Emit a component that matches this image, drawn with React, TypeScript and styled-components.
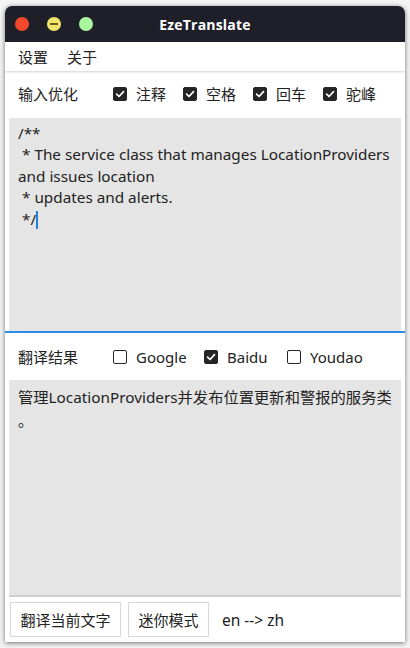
import React from "react";
import styled, { createGlobalStyle } from "styled-components";

const Global = createGlobalStyle`
  html, body { margin: 0; padding: 0; background: #f2f2f2; }
  body { font-family: "Noto Sans", "Noto Sans CJK SC", sans-serif; color: #222; }
  * { box-sizing: border-box; }
`;

const Page = styled.div`
  width: 410px;
  height: 648px;
  padding: 6px 5px;
  background: #f4f4f4;
`;

const Window = styled.div`
  width: 400px;
  height: 636px;
  display: flex;
  flex-direction: column;
  background: #fff;
  border-radius: 7px 7px 0 0;
  box-shadow: 0 1px 5px rgba(0, 0, 0, 0.55);
  overflow: hidden;
`;

const TitleBar = styled.div`
  height: 36px;
  flex: none;
  background: #1f1f2a;
  display: flex;
  align-items: center;
  position: relative;
  padding-left: 10px;
  gap: 18px;
`;

const Light = styled.div<{ $c: string }>`
  width: 14px;
  height: 14px;
  border-radius: 50%;
  background: ${(p) => p.$c};
  display: flex;
  align-items: center;
  justify-content: center;
`;

const Minus = styled.div`
  width: 8px;
  height: 2px;
  background: #6b5d18;
`;

const Title = styled.div`
  position: absolute;
  left: 0;
  right: 0;
  text-align: center;
  color: #fff;
  font-weight: 700;
  font-size: 14px;
  letter-spacing: 0.2px;
  font-family: "Open Sans", "Noto Sans", sans-serif;
`;

const MenuBar = styled.div`
  height: 29px;
  flex: none;
  display: flex;
  align-items: center;
  gap: 19px;
  padding-left: 13px;
  font-size: 15px;
  color: #222;
  box-shadow: 0 1px 2px rgba(0, 0, 0, 0.18);
  position: relative;
  z-index: 1;
`;

const OptionRow = styled.div`
  height: 47px;
  flex: none;
  display: flex;
  align-items: center;
  padding-left: 13px;
  padding-bottom: 2px;
  font-size: 15px;
`;

const RowLabel = styled.div`
  width: 95px;
  flex: none;
`;

const CheckItem = styled.label<{ $w: number }>`
  display: flex;
  align-items: center;
  width: ${(p) => p.$w}px;
  flex: none;
  gap: 9px;
  font-size: 15px;
  color: #222;
`;

const Box = styled.span<{ $on: boolean }>`
  width: 14px;
  height: 14px;
  border-radius: 2px;
  flex: none;
  display: flex;
  align-items: center;
  justify-content: center;
  background: ${(p) => (p.$on ? "#252525" : "#fff")};
  border: 1.5px solid #252525;
`;

const Input = styled.div`
  flex: none;
  height: 213px;
  margin: 0 4px;
  background: #e5e5e5;
  padding: 5px 9px;
  font-size: 15.3px;
  line-height: 21.4px;
  color: #222;
  white-space: pre-wrap;
`;

const Caret = styled.span`
  display: inline-block;
  width: 2px;
  height: 18px;
  background: #1f7fe0;
  vertical-align: -4px;
`;

const BlueLine = styled.div`
  height: 2px;
  flex: none;
  background: #2d8ae5;
`;

const ResultRow = styled(OptionRow)`
  height: 47px;
  padding-bottom: 0;
`;

const Output = styled.div`
  flex: 1;
  margin: 0 4px;
  background: #e5e5e5;
  padding: 6px 9px;
  font-size: 15.3px;
  line-height: 23px;
  color: #222;
  line-break: anywhere;
  border-bottom: 2px solid #cfcfcf;
`;

const BottomBar = styled.div`
  height: 45px;
  flex: none;
  display: flex;
  align-items: center;
  padding: 0 5px;
  gap: 7px;
  font-size: 15px;
`;

const Button = styled.button<{ $w: number }>`
  width: ${(p) => p.$w}px;
  height: 35px;
  background: #fff;
  border: 1px solid #d8d8d8;
  font-family: "Noto Sans", "Noto Sans CJK SC", sans-serif;
  font-size: 15px;
  color: #222;
  padding: 0;
`;

const Direction = styled.span`
  margin-left: 6px;
  font-size: 15.5px;
`;

const Check = ({ on }: { on: boolean }) => (
  <Box $on={on}>
    {on && (
      <svg width="10" height="10" viewBox="0 0 10 10">
        <path d="M1.6 5.2 L4 7.5 L8.5 2.6" stroke="#fff" strokeWidth="1.7" fill="none" strokeLinecap="round" strokeLinejoin="round" />
      </svg>
    )}
  </Box>
);

export default function App() {
  return (
    <>
      <Global />
      <Page>
        <Window>
          <TitleBar>
            <Light $c="#f4472c" />
            <Light $c="#f3e56b">
              <Minus />
            </Light>
            <Light $c="#a9f79c" />
            <Title>EzeTranslate</Title>
          </TitleBar>
          <MenuBar>
            <span>设置</span>
            <span>关于</span>
          </MenuBar>
          <OptionRow>
            <RowLabel>输入优化</RowLabel>
            <CheckItem $w={70}>
              <Check on />
              注释
            </CheckItem>
            <CheckItem $w={70}>
              <Check on />
              空格
            </CheckItem>
            <CheckItem $w={70}>
              <Check on />
              回车
            </CheckItem>
            <CheckItem $w={70}>
              <Check on />
              驼峰
            </CheckItem>
          </OptionRow>
          <Input>
            {"/**\n * The service class that manages LocationProviders and issues location\n * updates and alerts.\n */"}
            <Caret />
          </Input>
          <BlueLine />
          <ResultRow>
            <RowLabel>翻译结果</RowLabel>
            <CheckItem $w={91}>
              <Check on={false} />
              Google
            </CheckItem>
            <CheckItem $w={83}>
              <Check on />
              Baidu
            </CheckItem>
            <CheckItem $w={80}>
              <Check on={false} />
              Youdao
            </CheckItem>
          </ResultRow>
          <Output>管理LocationProviders并发布位置更新和警报的服务类。</Output>
          <BottomBar>
            <Button $w={111}>翻译当前文字</Button>
            <Button $w={81}>迷你模式</Button>
            <Direction>en --&gt; zh</Direction>
          </BottomBar>
        </Window>
      </Page>
    </>
  );
}
